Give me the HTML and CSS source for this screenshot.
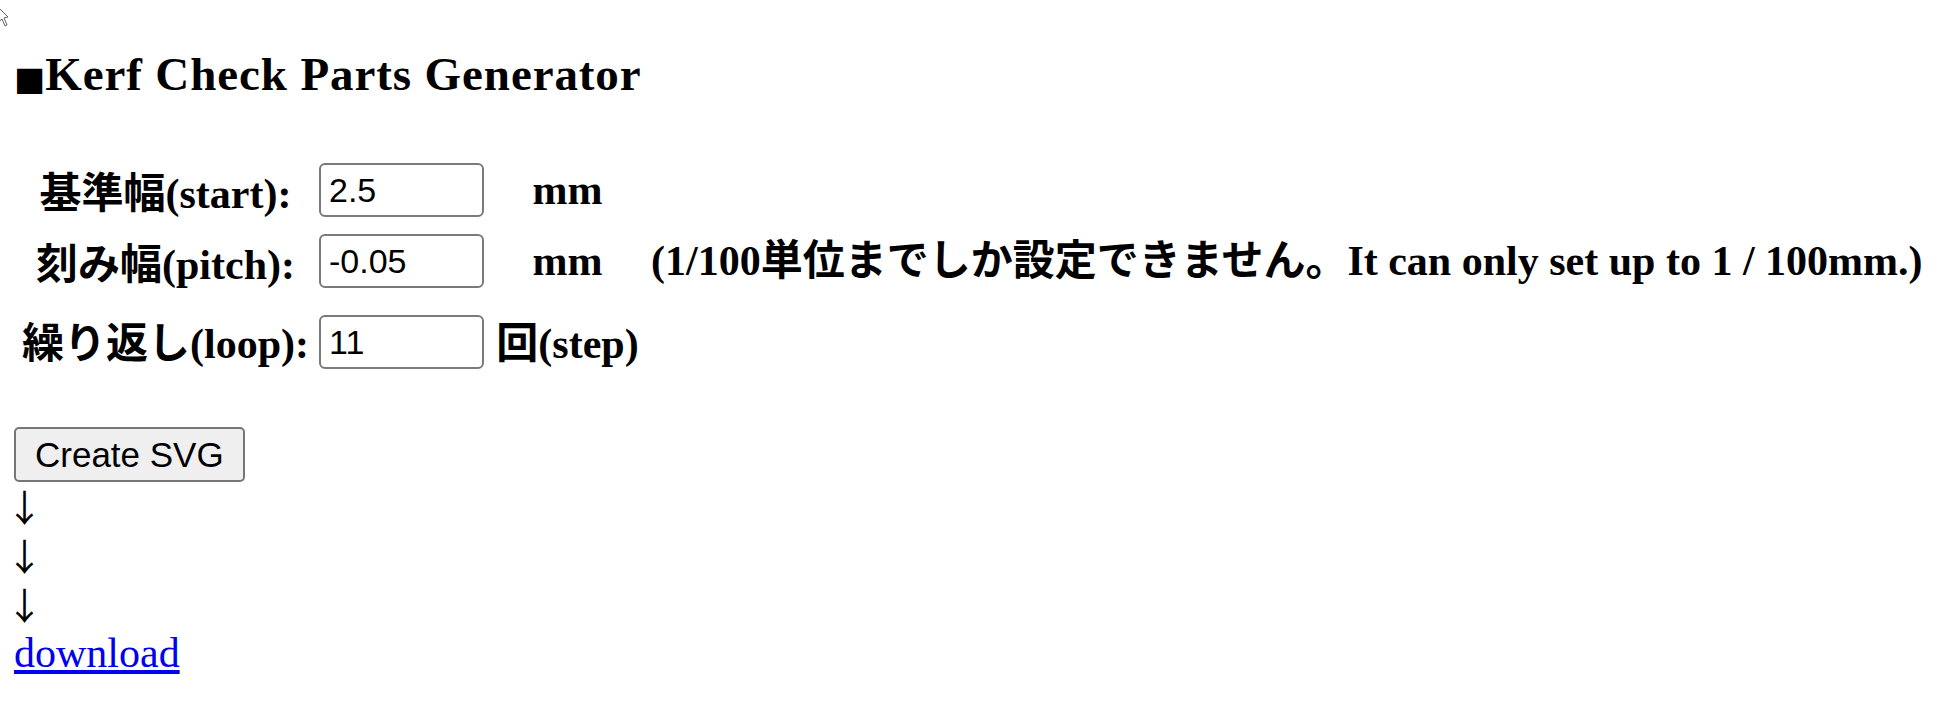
FILE: index.html
```html
<!DOCTYPE html>
<html lang="ja">
<head>
<meta charset="utf-8">
<title>Kerf Check Parts Generator</title>
<link rel="stylesheet" href="styles.css">
</head>
<body>
<svg class="cursor" width="14" height="28" viewBox="0 0 14 28"><path d="M-3 6 L8 17 L4 18 L7 25 L5 26 L2 19 L-3 23 Z" fill="#fff" stroke="#666" stroke-width="1"/></svg>
<div class="page">
  <h1 class="title"><span class="sq">■</span>Kerf Check Parts Generator</h1>
  <div class="form">
    <div class="lbl">基準幅(start):</div>
    <input class="field" type="text" value="2.5">
    <div class="unit">mm</div>
    <div class="note"></div>

    <div class="lbl">刻み幅(pitch):</div>
    <input class="field" type="text" value="-0.05">
    <div class="unit">mm</div>
    <div class="note">(1/100単位までしか設定できません。It can only set up to 1 / 100mm.)</div>

    <div class="lbl r3 lbl3">繰り返し(loop):</div>
    <input class="field r3" type="text" value="11">
    <div class="unit r3 step">回(step)</div>
    <div class="note r3"></div>
  </div>
  <button class="btn" type="button">Create SVG</button>
  <div class="arrows">
    <div class="arrow">↓</div>
    <div class="arrow">↓</div>
    <div class="arrow">↓</div>
  </div>
  <a class="dl" href="#">download</a>
</div>
</body>
</html>
```

FILE: styles.css
```css
html, body {
  margin: 0;
  padding: 0;
  background: #ffffff;
}
body {
  font-family: "Liberation Serif", "Noto Sans CJK JP", serif;
  font-size: 42px;
  line-height: 48px;
  color: #000;
}
.cursor {
  position: absolute;
  left: 0;
  top: 0;
}
.page {
  padding: 50px 0 0 14px;
}
.title {
  margin: 0;
  font-size: 47px;
  line-height: 48px;
  font-weight: bold;
  letter-spacing: 0.9px;
  padding-left: 0;
}
.sq {
  font-family: "DejaVu Sans", sans-serif;
  font-size: 33px;
  line-height: 1;
  letter-spacing: 0;
}
.form {
  display: grid;
  grid-template-columns: auto 165px 137px auto;
  column-gap: 15px;
  row-gap: 16px;
  align-items: start;
  justify-content: start;
  margin: 65px 0 0 3px;
  font-weight: bold;
}
.lbl {
  justify-self: center;
  padding-top: 7px;
  margin-left: 5px;
  margin-right: -5px;
  white-space: nowrap;
}
.lbl3 {
  padding-top: 5px;
}
.unit {
  justify-self: center;
  padding-top: 3px;
  white-space: nowrap;
}
.step {
  padding-top: 5px;
}
.note {
  padding-top: 3px;
  white-space: nowrap;
}
.field {
  box-sizing: border-box;
  width: 165px;
  height: 54px;
  margin: 0;
  padding: 0 8px;
  border: 2px solid #7a7a7a;
  border-radius: 6px;
  font-family: "Liberation Sans", Arial, sans-serif;
  font-size: 34px;
  color: #000;
  background: #fff;
}
.form .r3 {
  margin-top: 10px;
}
.btn {
  display: block;
  box-sizing: border-box;
  height: 55px;
  margin: 58px 0 0 0;
  padding: 0 19px;
  border: 2px solid #767676;
  border-radius: 5px;
  background: #efefef;
  font-family: "Liberation Sans", Arial, sans-serif;
  font-size: 35px;
  color: #000;
}
.arrow {
  font-family: "Noto Sans CJK JP", sans-serif;
  font-weight: normal;
  font-size: 37px;
  line-height: 49px;
  height: 49px;
  margin-left: -8px;
}
.dl {
  color: #0000ee;
  text-decoration: underline;
}
```
